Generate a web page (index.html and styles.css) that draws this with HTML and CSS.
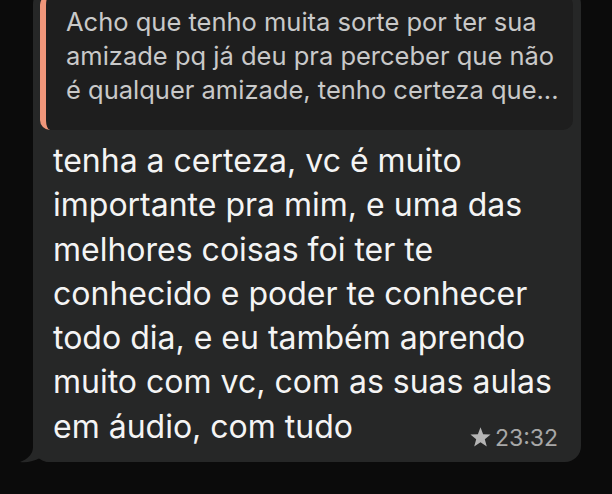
FILE: index.html
```html
<!DOCTYPE html>
<html lang="pt">
<head>
<meta charset="utf-8">
<link rel="stylesheet" href="styles.css">
</head>
<body>
<div class="chat">
  <div class="bubble">
    <div class="quote">
      <p class="quote-text">Acho que tenho muita sorte por ter sua<br>amizade pq já deu pra perceber que não<br>é qualquer amizade, tenho certeza que...</p>
    </div>
    <p class="message">tenha a certeza, vc é muito<br>importante pra mim, e uma das<br>melhores coisas foi ter te<br>conhecido e poder te conhecer<br>todo dia, e eu também aprendo<br>muito com vc, com as suas aulas</p>
    <div class="last-row">
      <span class="message-end">em áudio, com tudo</span>
      <span class="meta"><svg class="star" width="21" height="20" viewBox="0 0 20 19" aria-hidden="true"><path d="M10 0.3 L12.5 6.8 L19.6 7.1 L14.1 11.6 L16 18.6 L10 14.6 L4 18.6 L5.9 11.6 L0.4 7.1 L7.5 6.8 Z" fill="#b4b4b4"/></svg>23:32</span>
    </div>
    <svg class="tail" width="30" height="28" viewBox="0 0 30 28" aria-hidden="true">
      <path d="M14 0 L14 12 C14 19 9 24 1 27 C8 28 15 26 21 23 C24 25 27 27 30 27 L30 0 Z" fill="#262727"/>
    </svg>
  </div>
</div>
</body>
</html>
```

FILE: styles.css
```css
html, body {
  margin: 0;
  padding: 0;
  background: #0b0b0b;
  width: 612px;
  height: 494px;
  overflow: hidden;
}

.chat {
  padding-left: 33px;
}

.bubble {
  position: relative;
  width: 548px;
  box-sizing: border-box;
  margin-top: -12px;
  background: #262727;
  border-radius: 16px;
  padding: 7px 8px 10px 7px;
  font-family: Inter, "Noto Sans", sans-serif;
}

.quote {
  background: #1e1e1e;
  border-left: 6px solid #f0967a;
  border-radius: 10px;
  padding: 10px 8px 23px 20px;
}

.quote-text {
  margin: 0;
  font-size: 25.5px;
  line-height: 34px;
  color: #c9c9c9;
  white-space: nowrap;
}

.message {
  margin: 9px 0 0 13px;
  font-size: 32px;
  line-height: 44.3px;
  color: #f4f4f4;
}

.last-row {
  display: flex;
  justify-content: space-between;
  align-items: baseline;
  margin-left: 13px;
  padding-right: 15px;
  line-height: 44.3px;
}

.message-end {
  font-size: 32px;
  color: #f4f4f4;
}

.meta {
  display: inline-flex;
  align-items: baseline;
  font-size: 23px;
  color: #a8a8a8;
  position: relative;
  top: 8px;
}

.star {
  display: inline-block;
  margin-right: 4px;
  position: relative;
  top: 1px;
}

.tail {
  position: absolute;
  left: -14px;
  bottom: -1px;
  display: block;
}
```
